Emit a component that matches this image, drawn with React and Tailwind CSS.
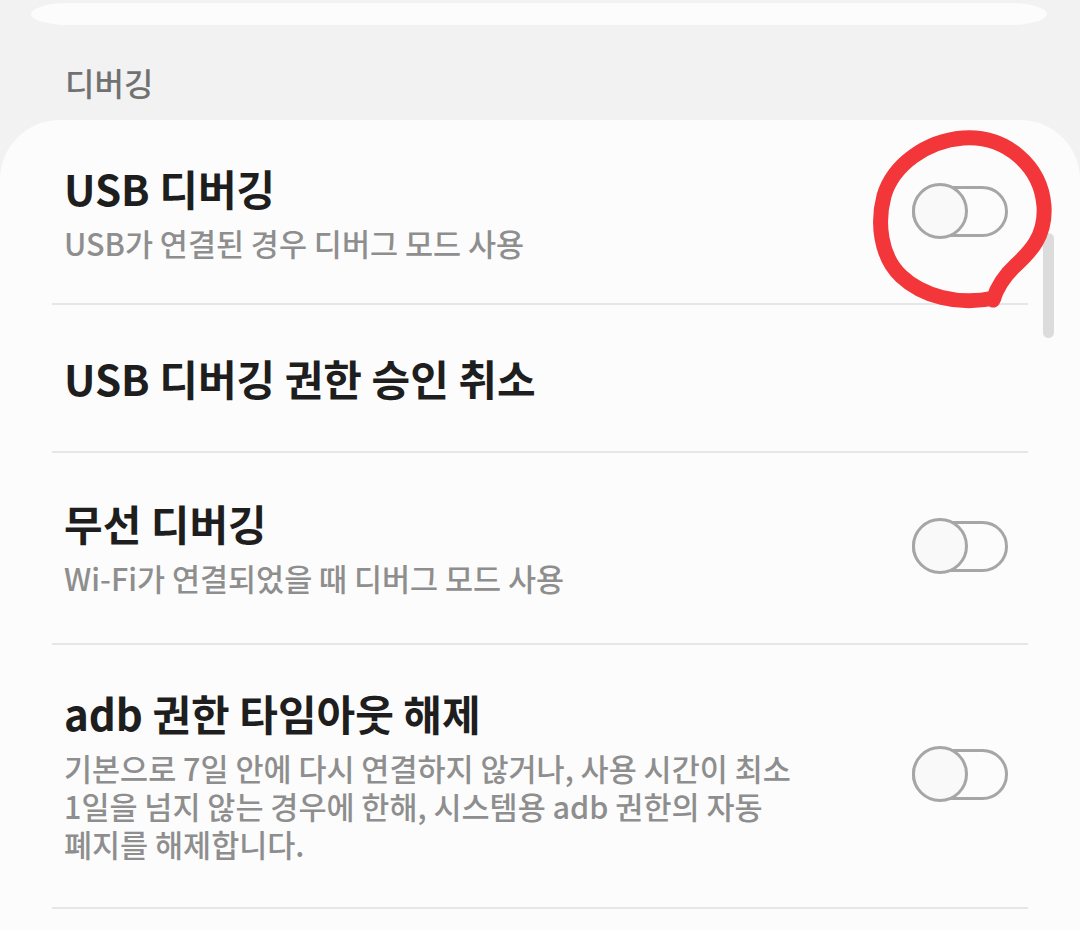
import React from "react";

const rows = [
    {
        title: "USB 디버깅",
        desc: ["USB가 연결된 경우 디버그 모드 사용"],
        toggle: true,
        pad: "pt-[40px] pb-[41px]",
    },
    {
        title: "USB 디버깅 권한 승인 취소",
        desc: [],
        toggle: false,
        pad: "pt-[45px] pb-[45px]",
    },
    {
        title: "무선 디버깅",
        desc: ["Wi-Fi가 연결되었을 때 디버그 모드 사용"],
        toggle: true,
        pad: "pt-[42px] pb-[46px]",
    },
    {
        title: "adb 권한 타임아웃 해제",
        desc: [
            "기본으로 7일 안에 다시 연결하지 않거나, 사용 시간이 최소",
            "1일을 넘지 않는 경우에 한해, 시스템용 adb 권한의 자동",
            "폐지를 해제합니다.",
        ],
        toggle: true,
        pad: "pt-[40px] pb-[44px]",
    },
];

function Toggle() {
    return (
        <div className="relative w-[96px] h-[56px] flex items-center shrink-0">
            <div className="w-full h-[51px] rounded-full border-[3px] border-[#a6a6a6]" />
            <div className="absolute left-0 top-0 w-[56px] h-[56px] rounded-full border-[3px] border-[#a6a6a6] bg-[#f9f9f9]" />
        </div>
    );
}

function Row({ row }) {
    return (
        <div className={`flex items-center justify-between pl-[64px] pr-[72px] ${row.pad}`}>
            <div className="flex flex-col">
                <div className="text-[42px] leading-[56px] font-semibold text-[#1e1e1e]">
                    {row.title}
                </div>
                {row.desc.length > 0 && (
                    <p className="mt-[8px] text-[30.5px] leading-[38px] font-medium text-[#8e8e8e]">
                        {row.desc.map((line, i) => (
                            <React.Fragment key={line}>
                                {i > 0 && <br />}
                                {line}
                            </React.Fragment>
                        ))}
                    </p>
                )}
            </div>
            {row.toggle && <Toggle />}
        </div>
    );
}

export default function App() {
    return (
        <div
            className="relative w-[1080px] h-[930px] overflow-hidden bg-[#f2f2f2]"
            style={{ fontFamily: '"Noto Sans CJK KR", "Noto Sans", sans-serif' }}
        >
            <div className="mt-[3px] ml-[31px] mr-[33px] h-[22px] bg-[#fcfcfc] rounded-[38px/11px]" />

            <div className="mt-[37px] mb-[18px] pl-[65px] text-[32px] leading-[40px] font-medium text-[#717171]">
                디버깅
            </div>

            <div className="bg-[#fcfcfc] rounded-t-[60px] min-h-[820px]">
                {rows.map((row) => (
                    <div key={row.title}>
                        <Row row={row} />
                        <div className="mx-[52px] h-[2px] bg-[#e6e6e6]" />
                    </div>
                ))}
            </div>

            {/* scrollbar */}
            <div className="absolute left-[1043px] top-[233px] w-[11px] h-[105px] rounded-full bg-[#dcdcdc]" />

            {/* red hand-drawn circle */}
            <svg
                className="absolute left-0 top-0 pointer-events-none"
                width="1080"
                height="930"
                viewBox="0 0 1080 930"
            >
                <path
                    d="M 994 298 C 958 306 922 296 901 276 C 880 256 877 222 884 196 C 893 165 926 141 963 138 C 1006 135 1041 166 1044 206 C 1046 236 1030 252 1016 265 C 1005 275 997 287 993 300"
                    fill="none"
                    stroke="#f2363a"
                    strokeWidth="15"
                    strokeLinecap="round"
                    strokeLinejoin="round"
                />
            </svg>
        </div>
    );
}
